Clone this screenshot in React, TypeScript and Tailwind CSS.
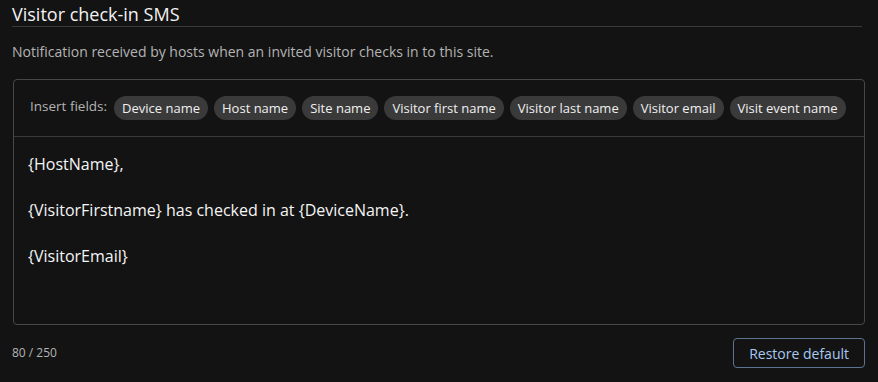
import React from "react";

const fields = [
  "Device name",
  "Host name",
  "Site name",
  "Visitor first name",
  "Visitor last name",
  "Visitor email",
  "Visit event name",
];

const App = () => {
  return (
    <div
      className="w-[878px] h-[382px] bg-[#131313] text-white px-[12px] pt-[3px]"
      style={{ fontFamily: '"Open Sans", "Noto Sans", sans-serif' }}
    >
      <h2 className="text-[18px] leading-[23px] text-[#f2f2f2] border-b border-[#3a3a3a] w-[850px]">
        Visitor check-in SMS
      </h2>

      <p className="mt-[15px] text-[14px] leading-[20px] text-[#b4b4b4]">
        Notification received by hosts when an invited visitor checks in to this site.
      </p>

      <div className="mt-[17px] ml-[1px] w-[852px] h-[246px] border border-[#484848] rounded-[4px] flex flex-col">
        <div className="flex items-center h-[57px] px-[16px] border-b border-[#3a3a3a] gap-[6px]">
          <span className="text-[13.5px] text-[#b4b4b4] mr-[1px] -mt-[4px]">Insert fields:</span>
          {fields.map((f) => (
            <span
              key={f}
              className="h-[24px] px-[8px] rounded-full bg-[#3a3a3a] text-[13px] leading-[24px] text-[#f0f0f0] whitespace-nowrap"
            >
              {f}
            </span>
          ))}
        </div>
        <div className="px-[14px] pt-[16px] text-[16px] leading-[23px] text-[#f5f5f5]">
          <p>{"{HostName},"}</p>
          <p className="mt-[23px]">{"{VisitorFirstname} has checked in at {DeviceName}."}</p>
          <p className="mt-[23px]">{"{VisitorEmail}"}</p>
        </div>
      </div>

      <div className="flex items-center justify-between w-[853px] mt-[13px]">
        <span className="text-[12px] text-[#b4b4b4]">80 / 250</span>
        <button className="h-[30px] px-[15px] border border-[#5c7391] rounded-[4px] text-[14px] text-[#a8c8f0]">
          Restore default
        </button>
      </div>
    </div>
  );
};

export default App;
